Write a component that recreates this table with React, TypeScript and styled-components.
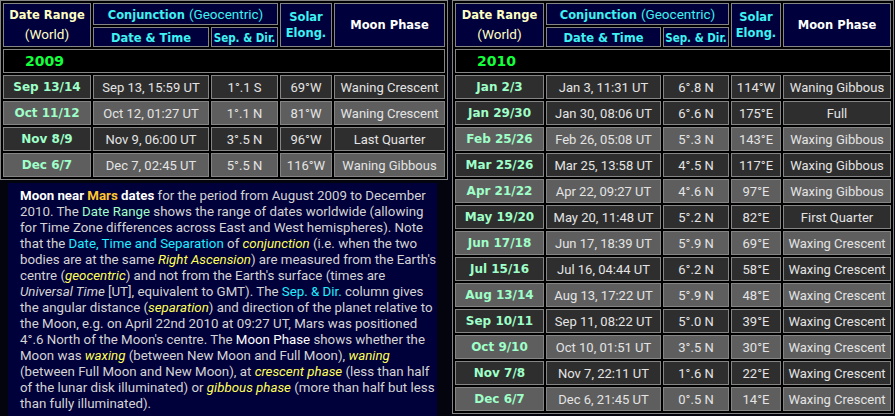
import React from 'react';
import styled, { createGlobalStyle } from 'styled-components';

interface Row {
  range: string;
  date: string;
  sep: string;
  elong: string;
  phase: string;
  light?: boolean;
}

const ROWS_2009: Row[] = [
  { range: 'Sep 13/14', date: 'Sep 13, 15:59 UT', sep: '1°.1 S', elong: '69°W', phase: 'Waning Crescent' },
  { range: 'Oct 11/12', date: 'Oct 12, 01:27 UT', sep: '1°.1 N', elong: '81°W', phase: 'Waning Crescent', light: true },
  { range: 'Nov 8/9', date: 'Nov 9, 06:00 UT', sep: '3°.5 N', elong: '96°W', phase: 'Last Quarter' },
  { range: 'Dec 6/7', date: 'Dec 7, 02:45 UT', sep: '5°.5 N', elong: '116°W', phase: 'Waning Gibbous', light: true },
];

const ROWS_2010: Row[] = [
  { range: 'Jan 2/3', date: 'Jan 3, 11:31 UT', sep: '6°.8 N', elong: '114°W', phase: 'Waning Gibbous' },
  { range: 'Jan 29/30', date: 'Jan 30, 08:06 UT', sep: '6°.6 N', elong: '175°E', phase: 'Full' },
  { range: 'Feb 25/26', date: 'Feb 26, 05:08 UT', sep: '5°.3 N', elong: '143°E', phase: 'Waxing Gibbous', light: true },
  { range: 'Mar 25/26', date: 'Mar 25, 13:58 UT', sep: '4°.5 N', elong: '117°E', phase: 'Waxing Gibbous' },
  { range: 'Apr 21/22', date: 'Apr 22, 09:27 UT', sep: '4°.6 N', elong: '97°E', phase: 'Waxing Gibbous', light: true },
  { range: 'May 19/20', date: 'May 20, 11:48 UT', sep: '5°.2 N', elong: '82°E', phase: 'First Quarter' },
  { range: 'Jun 17/18', date: 'Jun 17, 18:39 UT', sep: '5°.9 N', elong: '69°E', phase: 'Waxing Crescent', light: true },
  { range: 'Jul 15/16', date: 'Jul 16, 04:44 UT', sep: '6°.2 N', elong: '58°E', phase: 'Waxing Crescent' },
  { range: 'Aug 13/14', date: 'Aug 13, 17:22 UT', sep: '5°.9 N', elong: '48°E', phase: 'Waxing Crescent', light: true },
  { range: 'Sep 10/11', date: 'Sep 11, 08:22 UT', sep: '5°.0 N', elong: '39°E', phase: 'Waxing Crescent' },
  { range: 'Oct 9/10', date: 'Oct 10, 01:51 UT', sep: '3°.5 N', elong: '30°E', phase: 'Waxing Crescent', light: true },
  { range: 'Nov 7/8', date: 'Nov 7, 22:11 UT', sep: '1°.6 N', elong: '22°E', phase: 'Waxing Crescent' },
  { range: 'Dec 6/7', date: 'Dec 6, 21:45 UT', sep: '0°.5 N', elong: '14°E', phase: 'Waxing Crescent', light: true },
];

const GlobalStyle = createGlobalStyle`
  html, body {
    margin: 0;
    padding: 0;
    background: #04040f;
  }
`;

const BOLD = `'DejaVu Sans', Verdana, sans-serif`;
const REGULAR = `Roboto, 'Liberation Sans', sans-serif`;

interface TableProps {
  year: string;
  rows: Row[];
  cols: number[];
}

const ConjunctionTable: React.FC<TableProps> = ({ year, rows, cols }) => {
  const width = cols.reduce((a, b) => a + b, 0) + (cols.length + 1) * 2 + 2;
  return (
    <Table $width={width}>
      <colgroup>
        {cols.map((w, i) => (
          <Col key={i} $w={w} />
        ))}
      </colgroup>
      <thead>
        <tr>
          <HeadCell rowSpan={2}>
            <RangeTitle>Date Range</RangeTitle>
            <RangeSub>(World)</RangeSub>
          </HeadCell>
          <HeadCell colSpan={2} $h={22}>
            <CyanBold>Conjunction</CyanBold> <CyanNormal>(Geocentric)</CyanNormal>
          </HeadCell>
          <HeadCell rowSpan={2}>
            <SolarTitle>
              Solar
              <br />
              Elong.
            </SolarTitle>
          </HeadCell>
          <HeadCell rowSpan={2}>
            <PhaseTitle>Moon Phase</PhaseTitle>
          </HeadCell>
        </tr>
        <tr>
          <HeadCell $h={20}>
            <CyanBold>Date &amp; Time</CyanBold>
          </HeadCell>
          <HeadCell $h={20}>
            <CyanBold $narrow>Sep. &amp; Dir.</CyanBold>
          </HeadCell>
        </tr>
      </thead>
      <tbody>
        <tr>
          <YearCell colSpan={5}>
            <YearLabel>{year}</YearLabel>
          </YearCell>
        </tr>
        {rows.map((r) => (
          <tr key={r.range}>
            <RangeCell $light={r.light}>{r.range}</RangeCell>
            <DataCell $light={r.light}>{r.date}</DataCell>
            <DataCell $light={r.light}>{r.sep}</DataCell>
            <DataCell $light={r.light}>{r.elong}</DataCell>
            <DataCell $light={r.light}>{r.phase}</DataCell>
          </tr>
        ))}
      </tbody>
    </Table>
  );
};

export default function App() {
  return (
    <>
      <GlobalStyle />
      <Page>
        <LeftColumn>
          <ConjunctionTable year="2009" rows={ROWS_2009} cols={[88, 116, 67, 52, 111]} />
          <Notes>
            <Line>
              <Strong>Moon near </Strong>
              <Planet>Mars</Planet>
              <Strong> dates</Strong> for the period from August 2009 to December
            </Line>
            <Line>
              2010. The <Mint>Date Range</Mint> shows the range of dates worldwide (allowing
            </Line>
            <Line>for Time Zone differences across East and West hemispheres). Note</Line>
            <Line>
              that the <Cyan>Date, Time and Separation</Cyan> of <Term>conjunction</Term> (i.e. when the two
            </Line>
            <Line>
              bodies are at the same <Term>Right Ascension</Term>) are measured from the Earth's
            </Line>
            <Line>
              centre (<Term>geocentric</Term>) and not from the Earth's surface (times are
            </Line>
            <Line>
              <em>Universal Time</em> [UT], equivalent to GMT). The <Cyan>Sep. &amp; Dir.</Cyan> column gives
            </Line>
            <Line>
              the angular distance (<Term>separation</Term>) and direction of the planet relative to
            </Line>
            <Line>the Moon, e.g. on April 22nd 2010 at 09:27 UT, Mars was positioned</Line>
            <Line>
              4°.6 North of the Moon's centre. The <White>Moon Phase</White> shows whether the
            </Line>
            <Line>
              Moon was <Term>waxing</Term> (between New Moon and Full Moon), <Term>waning</Term>
            </Line>
            <Line>
              (between Full Moon and New Moon), at <Term>crescent phase</Term> (less than half
            </Line>
            <Line>
              of the lunar disk illuminated) or <Term>gibbous phase</Term> (more than half but less
            </Line>
            <Line>than fully illuminated).</Line>
          </Notes>
        </LeftColumn>
        <ConjunctionTable year="2010" rows={ROWS_2010} cols={[89, 115, 66, 50, 108]} />
      </Page>
    </>
  );
}

const Page = styled.div`
  width: 895px;
  height: 416px;
  overflow: hidden;
  display: flex;
  align-items: flex-start;
  gap: 4px;
  background: #04040f;
`;

const LeftColumn = styled.div`
  width: 448px;
  height: 416px;
  display: flex;
  flex-direction: column;
  gap: 3px;
`;

const Table = styled.table<{ $width: number }>`
  width: ${(p) => p.$width}px;
  flex-shrink: 0;
  table-layout: fixed;
  border-collapse: separate;
  border-spacing: 2px;
  border: 1px solid #858585;
  background: #000;
`;

const Col = styled.col<{ $w: number }>`
  width: ${(p) => p.$w}px;
`;

const HeadCell = styled.th<{ $h?: number }>`
  box-sizing: border-box;
  ${(p) => (p.$h ? `height: ${p.$h}px;` : '')}
  padding: 0;
  border: 1px solid #858585;
  background: #00003c;
  text-align: center;
  vertical-align: middle;
  font-weight: normal;
  white-space: nowrap;
  overflow: hidden;
`;

const RangeTitle = styled.div`
  font-family: ${BOLD};
  font-weight: bold;
  font-size: 11.5px;
  line-height: 19px;
  color: #ffffc4;
`;

const RangeSub = styled.div`
  font-family: ${REGULAR};
  font-size: 13.5px;
  line-height: 19px;
  color: #ffffc4;
`;

const CyanBold = styled.span<{ $narrow?: boolean }>`
  font-family: ${(p) => (p.$narrow ? `'DejaVu Sans Condensed', ${BOLD}` : BOLD)};
  font-weight: bold;
  font-size: 11.5px;
  color: #3ef2f2;
`;

const CyanNormal = styled.span`
  font-family: ${REGULAR};
  font-size: 13.5px;
  color: #3ef2f2;
`;

const SolarTitle = styled.div`
  font-family: ${BOLD};
  font-weight: bold;
  font-size: 11.5px;
  line-height: 16px;
  color: #3ef2f2;
`;

const PhaseTitle = styled.div`
  font-family: ${BOLD};
  font-weight: bold;
  font-size: 11.5px;
  color: #ffffff;
`;

const YearCell = styled.td`
  box-sizing: border-box;
  height: 24px;
  padding: 0;
  border: 1px solid #858585;
  background: #000;
  text-align: left;
`;

const YearLabel = styled.span`
  display: inline-block;
  margin-left: 21px;
  font-family: ${BOLD};
  font-weight: bold;
  font-size: 14px;
  color: #14ff3c;
`;

const DataCell = styled.td<{ $light?: boolean }>`
  box-sizing: border-box;
  height: 24px;
  padding: 0;
  border: 1px solid #858585;
  background: ${(p) => (p.$light ? '#5e5e5e' : '#2e2e2e')};
  text-align: center;
  white-space: nowrap;
  font-family: ${REGULAR};
  font-size: 13px;
  color: #e4e4e4;
`;

const RangeCell = styled(DataCell)`
  font-family: ${BOLD};
  font-weight: bold;
  font-size: 12px;
  color: #9effc8;
`;

const Notes = styled.div`
  flex: 1;
  margin: 0 11px 0 8px;
  padding: 5px 0 0 12px;
  background: #00003a;
  font-family: ${REGULAR};
  font-size: 13.3px;
  line-height: 16px;
  color: #d4d4d4;
`;

const Line = styled.div`
  white-space: nowrap;
`;

const Strong = styled.b`
  color: #ffffff;
`;

const Planet = styled.b`
  color: #ffc62e;
`;

const Mint = styled.span`
  color: #9effc8;
`;

const Cyan = styled.span`
  color: #22eeff;
`;

const White = styled.span`
  color: #ffffff;
`;

const Term = styled.em`
  color: #ffff5a;
`;
